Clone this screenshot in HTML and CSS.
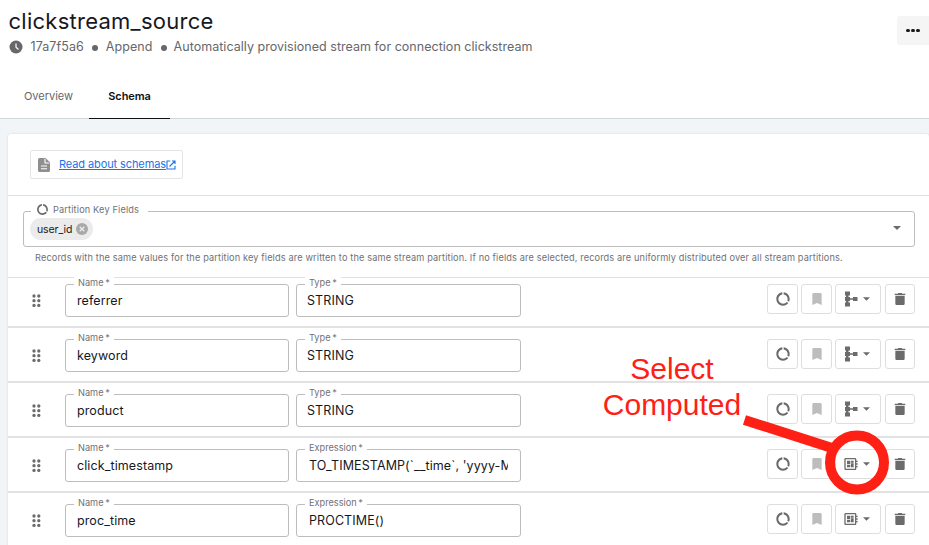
FILE: index.html
```html
<!DOCTYPE html>
<html lang="en">
<head>
<meta charset="utf-8">
<title>clickstream_source</title>
<link rel="stylesheet" href="styles.css">
</head>
<body>
<svg class="defs" width="0" height="0" aria-hidden="true">
  <symbol id="ring" viewBox="0 0 24 24"><path d="M13 2.05v3.03c3.39.49 6 3.39 6 6.92 0 .9-.18 1.75-.48 2.54l2.6 1.53c.56-1.24.88-2.62.88-4.07 0-5.18-3.95-9.45-9-9.95zM12 19c-3.87 0-7-3.13-7-7 0-3.53 2.61-6.43 6-6.92V2.05c-5.06.5-9 4.76-9 9.95 0 5.52 4.47 10 9.99 10 3.31 0 6.24-1.61 8.06-4.09l-2.6-1.53C16.17 17.98 14.21 19 12 19z"/></symbol>
  <symbol id="bookmark" viewBox="0 0 24 24"><path d="M17 3H7c-1.1 0-2 .9-2 2v16l7-3 7 3V5c0-1.100-.9-2-2-2z"/></symbol>
  <symbol id="tree" viewBox="0 0 16 16"><path d="M2 0.500h5v4H5.500v1.500H7v1.300h3V6h4.500v4H10V8.700H7V10H5.500v1.500H7v4H2v-4h1V10H2V6h1V4.500H2z"/></symbol>
  <symbol id="computed" viewBox="0 0 24 24"><path d="M22 9V7h-2V5c0-1.100-.9-2-2-2H4c-1.100 0-2 .9-2 2v14c0 1.100.9 2 2 2h14c1.100 0 2-.9 2-2v-2h2v-2h-2v-2h2v-2h-2V9h2zm-4 10H4V5h14v14zM6 13h5v4H6zm6-6h4v3h-4zM6 7h5v5H6zm6 4h4v6h-4z"/></symbol>
  <symbol id="trash" viewBox="0 0 24 24"><path d="M5 7v12c0 1.100.9 2 2 2h10c1.100 0 2-.9 2-2V7H5zM20 4h-4.500l-1-1h-5l-1 1H4v2h16V4z"/></symbol>
  <symbol id="caret" viewBox="0 0 8 4"><path d="M0 0h8L4 4z"/></symbol>
  <symbol id="grip" viewBox="0 0 10 14"><circle cx="2" cy="2" r="1.650"/><circle cx="6.800" cy="2" r="1.650"/><circle cx="2" cy="6.700" r="1.650"/><circle cx="6.800" cy="6.700" r="1.650"/><circle cx="2" cy="11.400" r="1.650"/><circle cx="6.800" cy="11.400" r="1.650"/></symbol>
</svg>

<header class="header">
  <div class="heading">
    <h1 class="title">clickstream_source</h1>
    <div class="meta">
      <svg class="clock" viewBox="0 0 14 14"><circle cx="7" cy="7" r="6.500" fill="#66676b"/><path d="M7 3.500V7.300L9.500 9.500" fill="none" stroke="#fff" stroke-width="1.200"/></svg>
      <span class="meta-id">17a7f5a6</span><i class="dot"></i><span class="meta-mode">Append</span><i class="dot"></i><span class="meta-text">Automatically provisioned stream for connection clickstream</span>
    </div>
  </div>
  <button class="more" aria-label="More"><i></i><i></i><i></i></button>
</header>
<nav class="tabs">
  <a class="tab">Overview</a>
  <a class="tab active">Schema</a>
</nav>

<main class="content">
  <section class="card">
    <div class="docs">
      <div class="docs-box">
        <svg class="doc-icon" viewBox="0 0 12 14"><path fill="#8f8f8f" d="M2 0h5.500L12 4.300V12.500A1.500 1.500 0 0 1 10.500 14h-9A1.500 1.500 0 0 1 0 12.500v-11A1.500 1.500 0 0 1 1.500 0z"/><path stroke="#fff" stroke-width="1.100" fill="none" d="M7 .8V5h4.300M3 8h6M3 10.700h6"/></svg>
        <a class="docs-link">Read about schemas</a>
        <svg class="ext" viewBox="0 0 10 10"><path fill="none" stroke="#1c73e8" stroke-width="1.100" d="M4.300 1H1v8h8V5.700M6 1h3v3M9 1L3.500 6.500"/></svg>
      </div>
    </div>

    <div class="partition">
      <div class="select">
        <span class="label select-label"><svg class="label-icon"><use href="#ring"/></svg>Partition Key Fields</span>
        <span class="chip">user_id<svg class="chip-x" viewBox="0 0 12 12"><circle cx="6" cy="6" r="6" fill="#a9a9a9"/><path d="M3.700 3.700l4.600 4.600M8.300 3.700L3.700 8.300" stroke="#ebebeb" stroke-width="1.300"/></svg></span>
        <svg class="caret"><use href="#caret"/></svg>
      </div>
      <p class="helper">Records with the same values for the partition key fields are written to the same stream partition. If no fields are selected, records are uniformly distributed over all stream partitions.</p>
    </div>

    <div class="rows">
      <div class="row">
        <svg class="grip"><use href="#grip"/></svg>
        <div class="field name"><span class="label">Name&thinsp;*</span><span class="value">referrer</span></div>
        <div class="field type"><span class="label">Type&thinsp;*</span><span class="value">STRING</span></div>
        <div class="actions"><button class="btn"><svg><use href="#ring"/></svg></button><button class="btn disabled"><svg><use href="#bookmark"/></svg></button><button class="btn wide"><svg class="kind"><use href="#tree"/></svg><svg class="caret"><use href="#caret"/></svg></button><button class="btn trash"><svg><use href="#trash"/></svg></button></div>
      </div>
      <div class="row">
        <svg class="grip"><use href="#grip"/></svg>
        <div class="field name"><span class="label">Name&thinsp;*</span><span class="value">keyword</span></div>
        <div class="field type"><span class="label">Type&thinsp;*</span><span class="value">STRING</span></div>
        <div class="actions"><button class="btn"><svg><use href="#ring"/></svg></button><button class="btn disabled"><svg><use href="#bookmark"/></svg></button><button class="btn wide"><svg class="kind"><use href="#tree"/></svg><svg class="caret"><use href="#caret"/></svg></button><button class="btn trash"><svg><use href="#trash"/></svg></button></div>
      </div>
      <div class="row">
        <svg class="grip"><use href="#grip"/></svg>
        <div class="field name"><span class="label">Name&thinsp;*</span><span class="value">product</span></div>
        <div class="field type"><span class="label">Type&thinsp;*</span><span class="value">STRING</span></div>
        <div class="actions"><button class="btn"><svg><use href="#ring"/></svg></button><button class="btn disabled"><svg><use href="#bookmark"/></svg></button><button class="btn wide"><svg class="kind"><use href="#tree"/></svg><svg class="caret"><use href="#caret"/></svg></button><button class="btn trash"><svg><use href="#trash"/></svg></button></div>
      </div>
      <div class="row">
        <svg class="grip"><use href="#grip"/></svg>
        <div class="field name"><span class="label">Name&thinsp;*</span><span class="value">click_timestamp</span></div>
        <div class="field expr"><span class="label">Expression&thinsp;*</span><span class="value">TO_TIMESTAMP(`__time`, 'yyyy-M</span></div>
        <div class="actions"><button class="btn"><svg><use href="#ring"/></svg></button><button class="btn disabled"><svg><use href="#bookmark"/></svg></button><button class="btn wide"><svg class="kind"><use href="#computed"/></svg><svg class="caret"><use href="#caret"/></svg></button><button class="btn trash"><svg><use href="#trash"/></svg></button></div>
      </div>
      <div class="row">
        <svg class="grip"><use href="#grip"/></svg>
        <div class="field name"><span class="label">Name&thinsp;*</span><span class="value">proc_time</span></div>
        <div class="field expr"><span class="label">Expression&thinsp;*</span><span class="value">PROCTIME()</span></div>
        <div class="actions"><button class="btn"><svg><use href="#ring"/></svg></button><button class="btn disabled"><svg><use href="#bookmark"/></svg></button><button class="btn wide"><svg class="kind"><use href="#computed"/></svg><svg class="caret"><use href="#caret"/></svg></button><button class="btn trash"><svg><use href="#trash"/></svg></button></div>
      </div>
    </div>
  </section>
</main>

<svg class="callout" viewBox="0 0 929 545">
  <path d="M744.500 420L832 448" stroke="#ff2015" stroke-width="10"/>
  <circle cx="857" cy="462.500" r="27" fill="none" stroke="#ff2015" stroke-width="10"/>
</svg>
<div class="callout-text">Select<br>Computed</div>
</body>
</html>
```

FILE: styles.css
```css
* { box-sizing: border-box; }
body {
  margin: 0;
  width: 929px;
  height: 545px;
  overflow: hidden;
  position: relative;
  background: #fff;
  color: #17181c;
  font-family: Inter, "Liberation Sans", sans-serif;
}
svg { display: block; flex: none; fill: #6b6b6b; }
button { font: inherit; padding: 0; border: 0; margin: 0; }
.defs { position: absolute; }

.header { height: 74px; display: flex; justify-content: space-between; }
.heading { padding: 8px 0 0 8.500px; }
.title { margin: 0; font-size: 22px; line-height: 26px; font-weight: 400; letter-spacing: 0.26px; }
.meta { display: flex; align-items: flex-start; margin-top: 5px; height: 16px; font-size: 12.500px; line-height: 16px; color: #66676b; letter-spacing: 0.08px; white-space: nowrap; }
.meta-text { letter-spacing: 0.03px; }
.clock { width: 14px; height: 14px; margin: 1px 8px 0 0; }
.dot { width: 6px; height: 6px; border-radius: 50%; background: #66676b; margin: 6px 8px 0; }
.meta-mode + .dot { margin-right: 7px; }
.more { width: 32px; height: 29px; margin-top: 16px; background: #f5f5f5; border-radius: 3px 0 0 3px; display: flex; align-items: center; justify-content: center; gap: 1.500px; }
.more i { width: 3.500px; height: 3.500px; border-radius: 50%; background: #17181c; }

.tabs { height: 45px; display: flex; padding-left: 8px; border-bottom: 1px solid #d0d7db; font-size: 11px; line-height: 14px; }
.tab { width: 81px; height: 45px; padding-top: 15px; text-align: center; color: #66676b; }
.tab.active { color: #101114; font-weight: 600; letter-spacing: -0.1px; border-bottom: 1.500px solid #101114; }

.content { background: #f1f5f8; padding: 15px 0 0 8px; }
.card { height: 420px; background: #fff; border-radius: 3px; box-shadow: 0 0 2px rgba(0, 0, 0, 0.15); }
.docs { height: 62px; padding: 16px 22px; border-bottom: 1px solid #e0e0e0; }
.docs-box { width: 153px; height: 29px; border: 1px solid #e4e4e4; border-radius: 2px; display: flex; align-items: center; padding-left: 7px; }
.doc-icon { width: 12px; height: 14px; margin-right: 9px; }
.docs-link { font-size: 11px; letter-spacing: -0.1px; margin-top: -1px; color: #1c73e8; text-decoration: underline; white-space: nowrap; }
.ext { width: 10px; height: 10px; margin: 1px 0 0 0; }

.partition { height: 82px; padding: 15px 14px 0 15px; border-bottom: 1px solid #e0e0e0; }
.select { position: relative; height: 36px; border: 1px solid #bdbdbd; border-radius: 3px; display: flex; align-items: center; justify-content: space-between; padding: 0 13px 0 6px; }
.label { position: absolute; top: -8px; left: 8px; height: 12px; padding: 0 4px; display: flex; align-items: center; background: #fff; font-size: 9.200px; line-height: 12px; color: #707175; white-space: nowrap; }
.select-label { left: 7px; width: 117px; padding: 0 5px; letter-spacing: 0.15px; }
.label-icon { width: 13px; height: 13px; margin-right: 4px; margin-top: -2px; }
.chip { display: flex; align-items: center; width: 63px; height: 22px; padding-left: 7px; border-radius: 11px; background: #ebebeb; font-size: 10.500px; letter-spacing: -0.1px; }
.chip-x { width: 12px; height: 12px; margin-left: 4px; }
.select > .caret { margin-top: -2px; }
.caret { width: 8px; height: 4px; }
.helper { margin: 5px 0 0 12px; font-size: 9.200px; line-height: 12px; color: #707175; white-space: nowrap; letter-spacing: 0.134px; }

.row { display: flex; height: 55px; padding: 11px 14px 0 24px; border-bottom: 2px solid #e2e2e2; }
.row:first-child { height: 50px; padding-top: 6px; }
.grip { width: 10px; height: 14px; margin: 10px 23px 0 0; }
.field { position: relative; height: 33px; border: 1px solid #bdbdbd; border-radius: 3px; padding: 0 11px; font-size: 12.500px; line-height: 31px; letter-spacing: 0.1px; }
.field .label { letter-spacing: 0; }
.name { width: 224px; margin-right: 7px; }
.type, .expr { width: 225px; }
.type { padding: 0 10px; }
.expr { padding: 0 12px; }
.value { display: block; overflow: hidden; white-space: nowrap; }
.actions { margin-left: auto; display: flex; gap: 3px; }
.btn { width: 31px; height: 30px; background: #fff; border: 1px solid #dedede; border-radius: 3px; display: flex; align-items: center; justify-content: center; }
.btn svg { width: 16px; height: 16px; }
.btn .caret { width: 7px; height: 4px; margin-left: 4px; }
.btn.wide { width: 46px; justify-content: flex-start; padding-left: 7px; }
.btn.trash { width: 30px; margin-left: 1px; }
.btn.trash svg { margin-top: -1px; }
.disabled svg { fill: #bdbdbd; }

.callout { position: absolute; left: 0; top: 0; width: 929px; height: 545px; }
.callout-text { position: absolute; left: 592px; top: 351px; width: 160px; text-align: center; font: 30px/36px "Liberation Sans", sans-serif; color: #ff2015; }
```
